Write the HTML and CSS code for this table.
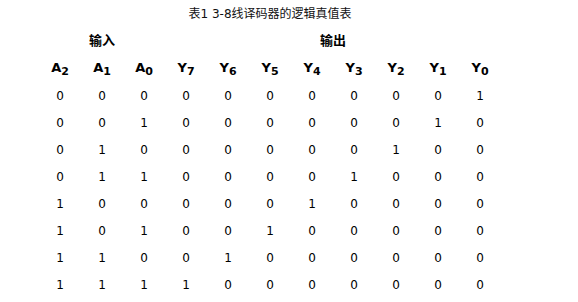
FILE: index.html
```html
<!DOCTYPE html>
<html>
<head>
<meta charset="utf-8">
<link rel="stylesheet" href="styles.css">
</head>
<body>
<div class="page">
  <div class="title">表1 3-8线译码器的逻辑真值表</div>
  <div class="grid">
    <div class="group g-in">输入</div>
    <div class="group g-out">输出</div>

    <div class="hd"><span>A<sub>2</sub></span></div>
    <div class="hd"><span>A<sub>1</sub></span></div>
    <div class="hd"><span>A<sub>0</sub></span></div>
    <div class="hd"><span>Y<sub>7</sub></span></div>
    <div class="hd"><span>Y<sub>6</sub></span></div>
    <div class="hd"><span>Y<sub>5</sub></span></div>
    <div class="hd"><span>Y<sub>4</sub></span></div>
    <div class="hd"><span>Y<sub>3</sub></span></div>
    <div class="hd"><span>Y<sub>2</sub></span></div>
    <div class="hd"><span>Y<sub>1</sub></span></div>
    <div class="hd"><span>Y<sub>0</sub></span></div>

    <div class="c">0</div><div class="c">0</div><div class="c">0</div><div class="c">0</div><div class="c">0</div><div class="c">0</div><div class="c">0</div><div class="c">0</div><div class="c">0</div><div class="c">0</div><div class="c">1</div>
    <div class="c">0</div><div class="c">0</div><div class="c">1</div><div class="c">0</div><div class="c">0</div><div class="c">0</div><div class="c">0</div><div class="c">0</div><div class="c">0</div><div class="c">1</div><div class="c">0</div>
    <div class="c">0</div><div class="c">1</div><div class="c">0</div><div class="c">0</div><div class="c">0</div><div class="c">0</div><div class="c">0</div><div class="c">0</div><div class="c">1</div><div class="c">0</div><div class="c">0</div>
    <div class="c">0</div><div class="c">1</div><div class="c">1</div><div class="c">0</div><div class="c">0</div><div class="c">0</div><div class="c">0</div><div class="c">1</div><div class="c">0</div><div class="c">0</div><div class="c">0</div>
    <div class="c">1</div><div class="c">0</div><div class="c">0</div><div class="c">0</div><div class="c">0</div><div class="c">0</div><div class="c">1</div><div class="c">0</div><div class="c">0</div><div class="c">0</div><div class="c">0</div>
    <div class="c">1</div><div class="c">0</div><div class="c">1</div><div class="c">0</div><div class="c">0</div><div class="c">1</div><div class="c">0</div><div class="c">0</div><div class="c">0</div><div class="c">0</div><div class="c">0</div>
    <div class="c">1</div><div class="c">1</div><div class="c">0</div><div class="c">0</div><div class="c">1</div><div class="c">0</div><div class="c">0</div><div class="c">0</div><div class="c">0</div><div class="c">0</div><div class="c">0</div>
    <div class="c">1</div><div class="c">1</div><div class="c">1</div><div class="c">1</div><div class="c">0</div><div class="c">0</div><div class="c">0</div><div class="c">0</div><div class="c">0</div><div class="c">0</div><div class="c">0</div>
  </div>
</div>
</body>
</html>
```

FILE: styles.css
```css
html, body {
  margin: 0;
  padding: 0;
  background: #ffffff;
}

body {
  font-family: "DejaVu Sans", "Noto Sans CJK SC", sans-serif;
  color: #000000;
}

.page {
  width: 462px;
  padding: 4px 0 0 39px;
}

.title {
  font-size: 12px;
  line-height: 20px;
  height: 20px;
  text-align: center;
  color: #111111;
}

.grid {
  display: grid;
  grid-template-columns: repeat(11, 42px);
  grid-template-rows: 30px 28px repeat(8, 27px);
}

.group {
  font-size: 13px;
  font-weight: bold;
  display: flex;
  align-items: center;
  justify-content: center;
}

.g-in {
  grid-column: 1 / 4;
}

.g-out {
  grid-column: 4 / 12;
}

.hd {
  font-size: 13px;
  font-weight: bold;
  display: flex;
  align-items: center;
  justify-content: center;
  line-height: 16px;
}

.hd span {
  white-space: nowrap;
}

.hd sub {
  font-size: 11px;
  line-height: 0;
  vertical-align: -3px;
}

.c {
  font-size: 12px;
  display: flex;
  align-items: center;
  justify-content: center;
}
```
